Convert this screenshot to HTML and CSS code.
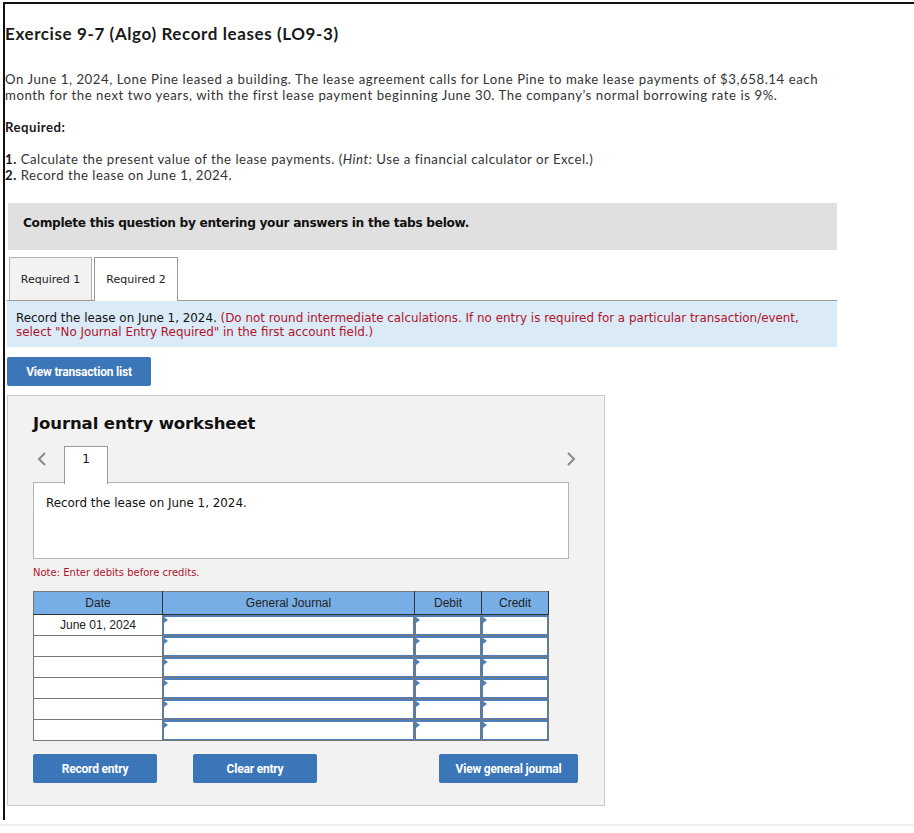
FILE: index.html
```html
<!DOCTYPE html>
<html>

<head>
    <meta charset="utf-8">
    <title>Exercise 9-7 (Algo) Record leases</title>

    <link rel="stylesheet" href="styles.css">
</head>

<body>

    <div class="frame">
        <h1 class="title">Exercise 9-7 (Algo) Record leases (LO9-3)</h1>

        <p class="intro">On June 1, 2024, Lone Pine leased a building. The lease agreement calls for Lone Pine to make lease payments of $3,658.14 each month for the next two years, with the first lease payment beginning June 30. The company’s normal borrowing rate is 9%.</p>

        <p class="required">Required:</p>

        <ol class="req-list">
            <li><b>1.</b> Calculate the present value of the lease payments. (<i>Hint:</i> Use a financial calculator or Excel.)</li>
            <li><b>2.</b> Record the lease on June 1, 2024.</li>
        </ol>

        <div class="banner">Complete this question by entering your answers in the tabs below.</div>

        <div class="tabs">
            <div class="tab">Required 1</div>
            <div class="tab tab-active">Required 2</div>
        </div>

        <div class="instructions">
            Record the lease on June 1, 2024. <span class="red">(Do not round intermediate calculations. If no entry is required for a particular transaction/event,</span><br>
            <span class="red">select "No Journal Entry Required" in the first account field.)</span>
        </div>

        <button class="btn btn-list">View transaction list</button>

        <section class="worksheet">
            <h2 class="ws-title">Journal entry worksheet</h2>

            <div class="ws-nav">
                <svg class="chev" width="10" height="16" viewBox="0 0 10 16">
                    <path d="M8 2 L2 8 L8 14" fill="none" stroke="#8a8a8a" stroke-width="2"/>
                </svg>
                <div class="ws-tab">1</div>
                <svg class="chev chev-right" width="10" height="16" viewBox="0 0 10 16">
                    <path d="M2 2 L8 8 L2 14" fill="none" stroke="#8a8a8a" stroke-width="2"/>
                </svg>
            </div>

            <div class="ws-box">Record the lease on June 1, 2024.</div>

            <p class="note">Note: Enter debits before credits.</p>

            <table class="journal">
                <thead>
                    <tr>
                        <th class="c-date">Date</th>
                        <th class="c-acct">General Journal</th>
                        <th class="c-num">Debit</th>
                        <th class="c-num">Credit</th>
                    </tr>
                </thead>
                <tbody>
                    <tr>
                        <td class="date">June 01, 2024</td>
                        <td><div class="field"></div></td>
                        <td><div class="field"></div></td>
                        <td><div class="field"></div></td>
                    </tr>
                    <tr>
                        <td class="date"></td>
                        <td><div class="field"></div></td>
                        <td><div class="field"></div></td>
                        <td><div class="field"></div></td>
                    </tr>
                    <tr>
                        <td class="date"></td>
                        <td><div class="field"></div></td>
                        <td><div class="field"></div></td>
                        <td><div class="field"></div></td>
                    </tr>
                    <tr>
                        <td class="date"></td>
                        <td><div class="field"></div></td>
                        <td><div class="field"></div></td>
                        <td><div class="field"></div></td>
                    </tr>
                    <tr>
                        <td class="date"></td>
                        <td><div class="field"></div></td>
                        <td><div class="field"></div></td>
                        <td><div class="field"></div></td>
                    </tr>
                    <tr>
                        <td class="date"></td>
                        <td><div class="field"></div></td>
                        <td><div class="field"></div></td>
                        <td><div class="field"></div></td>
                    </tr>
                </tbody>
            </table>

            <div class="ws-actions">
                <button class="btn btn-record">Record entry</button>
                <button class="btn btn-clear">Clear entry</button>
                <button class="btn btn-journal">View general journal</button>
            </div>
        </section>
    </div>

    <div class="bottom-line"></div>

</body>

</html>
```

FILE: styles.css
```css
/* Page */

body {
    margin: 0;
    background: #fff;
    font-family: Lato, "Open Sans", sans-serif;
    color: #333;
}

.frame {
    margin: 2px 0 0 3px;
    height: 818px;
    border-top: 2px solid #111;
    border-left: 2px solid #111;
    box-sizing: border-box;
}

.bottom-line {
    margin-top: 4px;
    height: 2px;
    background: #f0f0f0;
}

/* Question text */

.title {
    margin: 20px 0 0 0;
    font-size: 17px;
    line-height: 20px;
    letter-spacing: 0.6px;
    font-weight: bold;
    color: #1a1a1a;
}

.intro {
    margin: 27px 0 0 0;
    max-width: 850px;
    font-size: 13.2px;
    line-height: 16px;
    letter-spacing: 0.56px;
}

.required {
    margin: 16px 0 0 0;
    font-size: 13.2px;
    line-height: 16px;
    letter-spacing: 0.5px;
    font-weight: bold;
    color: #1a1a1a;
}

.req-list {
    list-style: none;
    margin: 16px 0 0 0;
    padding: 0;
    font-size: 13.2px;
    line-height: 16px;
    letter-spacing: 0.5px;
}

.req-list b {
    color: #1a1a1a;
}

/* Banner and tabs */

.banner {
    margin: 20px 0 0 3px;
    width: 829px;
    height: 47px;
    padding: 12px 0 0 15px;
    box-sizing: border-box;
    background: #e0e0e0;
    font-family: "DejaVu Sans", Verdana, sans-serif;
    font-size: 12.2px;
    line-height: 16px;
    font-weight: bold;
    letter-spacing: -0.32px;
    color: #111;
}

.tabs {
    display: flex;
    gap: 2px;
    margin: 7px 0 0 4px;
    height: 43px;
}

.tab {
    width: 83px;
    display: flex;
    align-items: center;
    justify-content: center;
    box-sizing: border-box;
    border: 1px solid #b0b0b0;
    border-bottom: none;
    background: #f2f2f2;
    font-family: "DejaVu Sans", Verdana, sans-serif;
    font-size: 11px;
    color: #222;
}

.tab-active {
    width: 84px;
    background: #fff;
    border-color: #9a9a9a;
    height: 44px;
    position: relative;
    z-index: 1;
}

.instructions {
    margin-left: 2px;
    width: 830px;
    box-sizing: border-box;
    padding: 10px 10px 8px 9px;
    border-top: 1px solid #9a9a9a;
    background: #daeaf7;
    font-family: "DejaVu Sans", Verdana, sans-serif;
    font-size: 11.9px;
    line-height: 14px;
    color: #111;
}

.red {
    color: #b3122a;
}

/* Buttons */

.btn {
    display: block;
    height: 29px;
    border: none;
    border-radius: 2px;
    background: #3b76b9;
    color: #fff;
    font-family: "Liberation Sans Narrow", "Roboto", sans-serif;
    font-size: 12px;
    font-weight: bold;
    letter-spacing: -0.2px;
    padding: 0;
}

.btn-list {
    margin: 10px 0 0 2px;
    width: 144px;
}

/* Worksheet */

.worksheet {
    margin: 9px 0 0 2px;
    width: 598px;
    height: 411px;
    box-sizing: border-box;
    padding: 0 0 0 25px;
    background: #f2f2f2;
    border: 1px solid #c8c8c8;
}

.ws-title {
    margin: 17px 0 0 0;
    font-family: "DejaVu Sans", Verdana, sans-serif;
    font-size: 16.5px;
    line-height: 22px;
    letter-spacing: -0.1px;
    font-weight: bold;
    color: #111;
}

.ws-nav {
    display: flex;
    align-items: flex-start;
    margin-top: 11px;
    width: 541px;
    height: 37px;
}

.chev {
    margin-left: 4px;
    margin-top: 5px;
}

.chev-right {
    margin-left: auto;
    margin-right: -2px;
}

.ws-tab {
    margin-left: 17px;
    width: 44px;
    height: 38px;
    box-sizing: border-box;
    border: 1px solid #9a9a9a;
    border-bottom: none;
    background: #fff;
    display: flex;
    justify-content: center;
    padding-top: 5px;
    font-family: "DejaVu Sans", Verdana, sans-serif;
    font-size: 12px;
    color: #111;
    position: relative;
    z-index: 1;
}

.ws-box {
    width: 536px;
    height: 77px;
    box-sizing: border-box;
    margin-top: -1px;
    padding: 13px 12px;
    background: #fff;
    border: 1px solid #b5b5b5;
    font-family: "DejaVu Sans", Verdana, sans-serif;
    font-size: 11.9px;
    color: #111;
}

.note {
    margin: 8px 0 0 0;
    font-family: "DejaVu Sans", Verdana, sans-serif;
    font-size: 10px;
    line-height: 12px;
    color: #b3122a;
}

/* Journal table */

.journal {
    margin-top: 12px;
    border-collapse: collapse;
    font-family: "Liberation Sans", Arial, sans-serif;
    font-size: 12px;
    color: #222;
}

.journal th {
    height: 22px;
    padding: 0;
    background: #77aee6;
    border: 1px solid #333;
    border-top-color: #777;
    border-left-color: #777;
    font-weight: normal;
}

.c-date {
    width: 128px;
}

.c-acct {
    width: 251px;
}

.c-num {
    width: 66px;
}

.journal td {
    height: 20px;
    padding: 0;
    background: #fff;
    border: 1px solid #777;
}

.journal td.date {
    text-align: center;
}

.field {
    position: relative;
    height: 20px;
    box-sizing: border-box;
    border: 1px solid #4f7fba;
    border-top-width: 2px;
}

.field::before {
    content: "";
    position: absolute;
    left: 0;
    top: 0;
    border-top: 3px solid transparent;
    border-bottom: 3px solid transparent;
    border-left: 4px solid #4f7fba;
}

.ws-actions {
    display: flex;
    margin-top: 13px;
    width: 545px;
}

.btn-record,
.btn-clear {
    width: 124px;
}

.btn-clear {
    margin-left: 36px;
}

.btn-journal {
    width: 139px;
    margin-left: auto;
}
```
